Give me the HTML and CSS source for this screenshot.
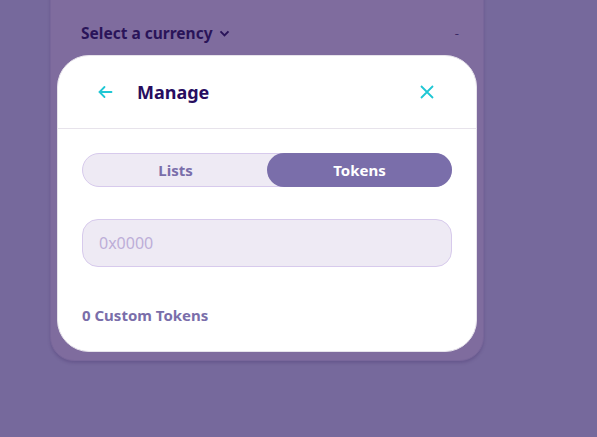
FILE: index.html
```html
<!DOCTYPE html>
<html lang="en">
<head>
  <meta charset="UTF-8">
  <title>Manage</title>
  <meta name="viewport" content="width=device-width,initial-scale=1">
  <link rel="stylesheet" href="styles.css">
</head>
<body>
  <div class="panel">
    <div class="panel-row">
      <span class="currency">Select a currency
        <svg width="13" height="13" viewBox="0 0 12 12"><path d="M2.3 4 6 7.7 9.7 4" fill="none" stroke="currentColor" stroke-width="1.8"/></svg>
      </span>
      <span class="dash">-</span>
    </div>
  </div>

  <div class="modal">
    <div class="modal-head">
      <button class="icon-btn">
        <svg width="18" height="18" viewBox="0 0 18 18"><path d="M15.5 9H3.5M8.5 4 3.5 9l5 5" fill="none" stroke="#1fc7d4" stroke-width="1.8" stroke-linecap="round"/></svg>
      </button>
      <h2>Manage</h2>
      <button class="icon-btn close">
        <svg width="16" height="16" viewBox="0 0 16 16"><path d="M2 2l12 12M14 2 2 14" stroke="#1fc7d4" stroke-width="1.8"/></svg>
      </button>
    </div>
    <div class="modal-body">
      <div class="toggle">
        <button class="tab">Lists</button>
        <button class="tab active">Tokens</button>
      </div>
      <input class="addr" type="text" placeholder="0x0000">
      <div class="count">0 Custom Tokens</div>
    </div>
  </div>
</body>
</html>
```

FILE: styles.css
```css
body {
  margin: 0;
  height: 437px;
  overflow: hidden;
  background: #76699c;
  font-family: "Noto Sans", "Liberation Sans", sans-serif;
  position: relative;
}
button { font-family: inherit; cursor: pointer; }

/* page behind the overlay */
.panel {
  position: absolute;
  left: 50px; top: -40px;
  width: 434px; height: 401px;
  background: #7f6c9e;
  border: 1px solid #78669a;
  border-radius: 24px;
  box-shadow: 0 2px 3px rgba(60, 40, 100, 0.25);
  box-sizing: border-box;
}
.panel-row {
  display: flex; justify-content: space-between; align-items: center;
  margin: 61px 24px 0 30px;
}
.currency {
  color: #2a1459; font-weight: 700; font-size: 15.5px;
  display: flex; align-items: center; gap: 5px;
}
.dash { color: #3b2a66; font-size: 13px; }

/* modal */
.modal {
  position: absolute;
  left: 57px; top: 55px;
  width: 420px; height: 297px;
  background: #fff;
  border: 1px solid #e7e3eb;
  border-radius: 32px;
  box-sizing: border-box;
}
.modal-head {
  display: flex; align-items: center;
  height: 72px;
  padding: 0 37px 0 34px;
  border-bottom: 1px solid #e7e3eb;
}
.modal-head h2 {
  margin: -1px 0 0 19px; flex: 1;
  font-size: 18px; font-weight: 700; color: #280d5f;
}
.icon-btn {
  background: none; border: 0; padding: 4px;
  display: flex; align-items: center;
}
.modal-body { padding: 24px 24px 0; }

.toggle {
  display: flex;
  height: 34px;
  background: #eeeaf4;
  border: 1px solid #d7caec;
  border-radius: 17px;
  box-sizing: border-box;
}
.tab {
  flex: 1; border: 0; background: none;
  border-radius: 17px;
  font-size: 15px; font-weight: 700; color: #7a6eaa;
}
.tab.active { background: #7a6eaa; color: #fff; margin: -1px; }

.addr {
  display: block;
  width: 100%; height: 48px;
  margin-top: 32px;
  padding: 0 16px;
  box-sizing: border-box;
  background: #eeeaf4;
  border: 1px solid #d7caec;
  border-radius: 16px;
  font-family: inherit; font-size: 16px; color: #280d5f;
  outline: none;
}
.addr::placeholder { color: #bdaed8; }

.count {
  margin-top: 38px;
  font-size: 15px; font-weight: 700; color: #7a6eaa;
}
```
